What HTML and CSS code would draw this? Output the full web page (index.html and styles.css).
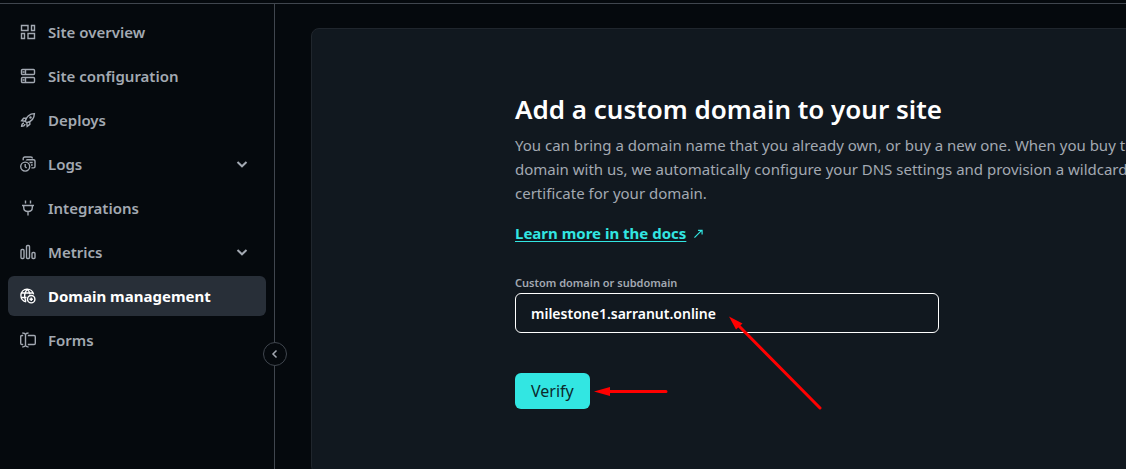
FILE: index.html
```html
<!DOCTYPE html>
<html lang="en">
<head>
<meta charset="utf-8">
<title>Domain management</title>
<link rel="stylesheet" href="styles.css">
</head>
<body>
<div class="app">
  <aside class="sidebar">
    <nav class="nav" aria-label="Site">
      <a class="nav-item" href="#">
        <svg class="icon" viewBox="0 0 16 16"><path d="M1.500 1.500h6.500v5H1.500zM11.500 1.500h3v5h-3zM1.500 9.500h3v5h-3zM8 9.500h6.500v5H8z"/></svg>
        <span>Site overview</span>
      </a>
      <a class="nav-item" href="#">
        <svg class="icon" viewBox="0 0 16 16"><rect x="1.500" y="1.500" width="13" height="5" rx="1"/><rect x="1.500" y="9.500" width="13" height="5" rx="1"/><path d="M5.500 2v4M5.500 10v4M2.500 4h2M2.500 12h2"/></svg>
        <span>Site configuration</span>
      </a>
      <a class="nav-item" href="#">
        <svg class="icon" viewBox="0 0 16 16"><path d="M5.200 9.200C6.200 5.400 9 1.800 14.400 1.600C14.200 7 10.600 9.800 6.800 10.800zM6 6.200H3.600L1.600 8.800l3.600.4M9.800 10v2.400l-2.600 2-.4-3.600M4 11c-1.600.2-2.300 1.400-2.400 3.400c2 0 3.200-.8 3.400-2.400"/><circle cx="10.500" cy="5.500" r=".6"/></svg>
        <span>Deploys</span>
      </a>
      <a class="nav-item" href="#">
        <svg class="icon" viewBox="0 0 16 16"><circle cx="5.200" cy="10.600" r="4.500"/><path d="M5.200 8v2.800l1.400 1.200M3.200 4.200V2.600c0-1 .6-1.600 1.600-1.600h6c1 0 1.600.6 1.600 1.600M6.400 4.600c0-.6.300-.9 1-.9h6.200c1 0 1.400.4 1.400 1.400v5.400c0 1-.4 1.400-1.400 1.400h-2.200M9.500 6.500h3.200M11 9h1.700"/></svg>
        <span>Logs</span>
        <svg class="chevron" viewBox="0 0 12 12"><path d="M1.500 4L6 8.300L10.500 4"/></svg>
      </a>
      <a class="nav-item" href="#">
        <svg class="icon" viewBox="0 0 16 16"><path d="M5.500.5v3M10.500.5v3M2 5.500h12M3.700 5.500v2c0 2.200 1.500 4 4.300 4s4.300-1.800 4.300-4v-2M8 11.500v4"/></svg>
        <span>Integrations</span>
      </a>
      <a class="nav-item" href="#">
        <svg class="icon" viewBox="0 0 16 16"><rect x="1" y="5.500" width="3" height="9" rx="1"/><rect x="6.500" y="1.500" width="3" height="13" rx="1"/><rect x="12" y="8.500" width="3" height="6" rx="1"/></svg>
        <span>Metrics</span>
        <svg class="chevron" viewBox="0 0 12 12"><path d="M1.500 4L6 8.300L10.500 4"/></svg>
      </a>
      <a class="nav-item active" href="#" aria-current="page">
        <svg class="icon" viewBox="0 0 16 16"><path d="M6.200 13.800A6.400 6.400 0 1 1 13.600 6.400M1.500 5h11.500M1.500 9.500h5M5.900 13.200C3.800 9.500 4.200 4.200 7.300 1.200C9.200 3 9.900 4.600 10 6.400"/><circle cx="11.200" cy="11.200" r="3.700"/><path d="M11.200 9.500v3.400M9.500 11.200h3.400"/></svg>
        <span>Domain management</span>
      </a>
      <a class="nav-item" href="#">
        <svg class="icon" viewBox="0 0 16 16"><path d="M3.200 3.500H1.900c-.8 0-1.200.4-1.200 1.200v6.600c0 .8.400 1.200 1.200 1.200h1.300M7.800 3.500h6.300c.8 0 1.200.4 1.200 1.200v6.600c0 .8-.4 1.200-1.200 1.200H7.800M2.300 1c1.700 0 2.900.6 3.200 1.600C5.800 1.600 6.800 1 8.500 1M5.500 2.500v11M2.300 15c1.700 0 2.900-.6 3.200-1.600c.3 1 1.300 1.600 3 1.600"/></svg>
        <span>Forms</span>
      </a>
    </nav>
    <button class="collapse" type="button" aria-label="Collapse sidebar">
      <svg viewBox="0 0 10 10"><path d="M6.500 1.500L3 5l3.500 3.500"/></svg>
    </button>
  </aside>
  <main class="main">
    <section class="card">
      <div class="content">
        <h1>Add a custom domain to your site</h1>
        <p class="intro">You can bring a domain name that you already own, or buy a new one. When you buy the domain with us, we automatically configure your DNS settings and provision a wildcard certificate for your domain.</p>
        <p class="docs"><a href="#">Learn more in the docs</a><svg class="external" viewBox="0 0 10 10"><path d="M.5 9.500L8.500 1.500M4.500 1.500h4.500v4.500"/></svg></p>
        <form class="form">
          <label for="domain">Custom domain or subdomain</label>
          <input id="domain" type="text" value="milestone1.sarranut.online">
          <button class="verify" type="button">Verify</button>
        </form>
        <svg class="arrows" viewBox="0 0 310 124" aria-hidden="true">
          <path class="shaft" d="M305 123L223 40M92 106.500H151"/>
          <path class="head" d="M214 31.500L227.500 38.500L221 44.500ZM79 106.500L95 102V111Z"/>
        </svg>
      </div>
    </section>
  </main>
</div>
</body>
</html>
```
FILE: styles.css
```css
* {
  box-sizing: border-box;
}

body {
  margin: 0;
  padding-top: 3px;
  background: #05090d;
  color: #a3a9b2;
  font-family: "Segoe UI", "Noto Sans", sans-serif;
  font-size: 15px;
  line-height: 24px;
  overflow: hidden;
}

.app {
  display: flex;
  min-height: calc(100vh - 3px);
  border-top: 1px solid #40464e;
}

svg {
  fill: none;
  stroke: currentColor;
}

.sidebar {
  position: relative;
  flex: 0 0 275px;
  padding: 8px;
  border-right: 1px solid #40464e;
}

.nav {
  display: flex;
  flex-direction: column;
  gap: 4px;
}

.nav-item {
  display: flex;
  align-items: center;
  gap: 12px;
  height: 40px;
  padding: 0 18px 0 12px;
  border-radius: 6px;
  color: #a3a9b2;
  font-weight: 600;
  text-decoration: none;
}

.nav-item.active {
  background: #282f38;
  color: #fff;
  font-weight: 700;
}

.icon {
  width: 16px;
  height: 16px;
  stroke-width: 1.4;
}

.chevron {
  width: 12px;
  height: 12px;
  margin-left: auto;
  stroke-width: 2;
}

.collapse {
  position: absolute;
  top: 338px;
  right: -13px;
  display: grid;
  place-items: center;
  width: 24px;
  height: 24px;
  padding: 0;
  border: 1px solid #40464e;
  border-radius: 50%;
  background: #05090d;
  color: #a3a9b2;
}

.collapse svg {
  width: 10px;
  height: 10px;
  stroke-width: 1.5;
}

.main {
  display: flex;
  flex: 1;
  min-width: 0;
  padding: 24px 0 0 36px;
}

.card {
  flex: 1 0 auto;
  padding: 64px 203px;
  border: 1px solid #20262d;
  border-radius: 8px;
  background: #11181f;
}

.content {
  position: relative;
  width: 640px;
}

h1 {
  margin: 0 0 8px;
  color: #fff;
  font-size: 26px;
  font-weight: 600;
  line-height: 32px;
}

p {
  margin: 0;
}

.docs {
  display: flex;
  align-items: center;
  gap: 8px;
  margin-top: 16px;
  color: #32e6e2;
}

.docs a {
  color: inherit;
  font-weight: 700;
  text-underline-offset: 2px;
}

.external {
  width: 9px;
  height: 9px;
  stroke-width: 1.3;
}

.form {
  display: flex;
  flex-direction: column;
  align-items: flex-start;
  margin-top: 30px;
}

.form label {
  font-size: 11px;
  font-weight: 600;
  line-height: 16px;
}

.form input {
  width: 424px;
  height: 40px;
  margin-top: 2px;
  padding: 0 15px;
  border: 1px solid #fff;
  border-radius: 6px;
  background: transparent;
  color: #fff;
  font: inherit;
  font-size: 14px;
  font-weight: 600;
}

.verify {
  height: 36px;
  margin-top: 40px;
  padding: 0 16px;
  border: 0;
  border-radius: 6px;
  background: #32e6e2;
  color: #0c2a2c;
  font: inherit;
  font-size: 16px;
}

.arrows {
  position: absolute;
  left: 0;
  bottom: 0;
  width: 310px;
  height: 124px;
  overflow: visible;
  pointer-events: none;
}

.shaft {
  stroke: #f00;
  stroke-width: 3;
  stroke-linecap: round;
}

.head {
  fill: #f00;
  stroke: none;
}
```
